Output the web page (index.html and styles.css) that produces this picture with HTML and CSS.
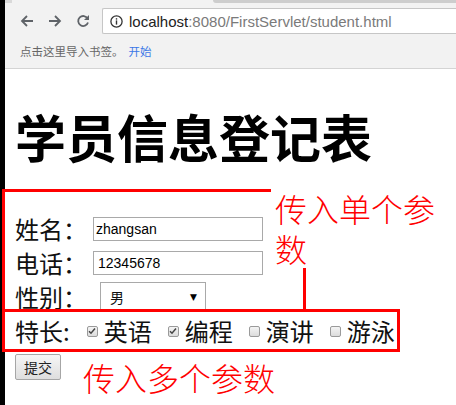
FILE: index.html
```html
<!DOCTYPE html>
<html lang="zh-CN">
<head>
<meta charset="utf-8">
<title>student</title>
<link rel="stylesheet" href="styles.css">
</head>
<body>
<div class="frame">
  <div class="blackbar"></div>
  <div class="window">
    <div class="chrome">
      <div class="tabstrip"><div class="tabcorner"></div><div class="tab"></div></div>
      <div class="toolbar">
        <span class="navbtn">
          <svg width="14" height="14" viewBox="0 0 14 14"><path d="M13 7H2M7 2L2 7l5 5" fill="none" stroke="#5f6368" stroke-width="1.8"/></svg>
        </span>
        <span class="navbtn">
          <svg width="14" height="14" viewBox="0 0 14 14"><path d="M1 7h11M7 2l5 5-5 5" fill="none" stroke="#5f6368" stroke-width="1.8"/></svg>
        </span>
        <span class="navbtn">
          <svg width="14" height="14" viewBox="0 0 14 14"><path d="M11.6 4.6A5 5 0 1 0 12 8.5" fill="none" stroke="#5f6368" stroke-width="1.8"/><path d="M13 1v5H8z" fill="#5f6368"/></svg>
        </span>
        <div class="omnibox">
          <svg class="info" width="13" height="13" viewBox="0 0 13 13"><circle cx="6.5" cy="6.5" r="5.6" fill="none" stroke="#333" stroke-width="1.3"/><rect x="5.8" y="5.4" width="1.4" height="4.2" fill="#333"/><rect x="5.8" y="3.2" width="1.4" height="1.4" fill="#333"/></svg>
          <span class="host">localhost</span><span class="path">:8080/FirstServlet/student.html</span>
        </div>
      </div>
      <div class="bookmarks">点击这里导入书签。 <a class="start">开始</a></div>
    </div>
    <div class="page">
      <h1 class="title">学员信息登记表</h1>
      <form class="form">
        <div class="row row-a"><span class="label">姓名：</span><span class="field">zhangsan</span></div>
        <div class="row row-b"><span class="label">电话：</span><span class="field field-b">12345678</span></div>
        <div class="row row-c"><span class="label">性别：</span><span class="select"><span class="opt">男</span><span class="arrow">▼</span></span></div>
        <div class="row row-d">
          <span class="label">特长:</span>
          <span class="cb checked first"><svg width="8" height="8" viewBox="0 0 8 8"><path d="M1 4.2l2 2L7 1.6" fill="none" stroke="#444" stroke-width="1.5"/></svg></span><span class="opt-text">英语</span>
          <span class="cb checked"><svg width="8" height="8" viewBox="0 0 8 8"><path d="M1 4.2l2 2L7 1.6" fill="none" stroke="#444" stroke-width="1.5"/></svg></span><span class="opt-text">编程</span>
          <span class="cb"></span><span class="opt-text">演讲</span>
          <span class="cb"></span><span class="opt-text">游泳</span>
        </div>
        <div class="row row-e"><span class="button">提交</span></div>
      </form>
      <div class="box box-one"></div>
      <div class="box box-two"></div>
      <div class="note note-one">传入单个参数</div>
      <div class="note note-two">传入多个参数</div>
    </div>
  </div>
</div>
</body>
</html>
```
FILE: styles.css
```css
html, body {
  margin: 0;
  padding: 0;
  background: #fff;
}
body {
  width: 456px;
  height: 405px;
  overflow: hidden;
  font-family: "Noto Sans CJK SC", "Liberation Sans", sans-serif;
}
.frame {
  display: flex;
  height: 405px;
}
.blackbar {
  width: 5px;
  flex: none;
  background: #000;
}
.window {
  flex: 1;
  display: flex;
  flex-direction: column;
  position: relative;
  min-width: 0;
}
.chrome {
  height: 68px;
  background: #f2f2f2;
  border-bottom: 1px solid #d4d4d4;
  display: flex;
  flex-direction: column;
}
.tabstrip {
  height: 3px;
  display: flex;
}
.tabcorner {
  width: 7px;
  background: #d9d9d9;
}
.tab {
  margin-left: 201px;
  flex: 1;
  background: #cdcdcd;
  border-radius: 0 0 0 4px;
}
.toolbar {
  margin-top: 5px;
  height: 26px;
  display: flex;
  align-items: center;
  padding-left: 8px;
}
.navbtn {
  width: 28px;
  display: flex;
  justify-content: center;
  align-items: center;
}
.omnibox {
  margin-left: 5px;
  flex: 1;
  height: 24px;
  background: #fff;
  border: 1px solid #c6c6c6;
  border-right: none;
  border-radius: 2px 0 0 2px;
  display: flex;
  align-items: center;
  padding-left: 7px;
  font-family: "Liberation Sans", Arial, sans-serif;
  font-size: 15px;
  white-space: nowrap;
}
.info {
  margin-right: 6px;
}
.host { color: #222; }
.path { color: #7a7a7a; }
.bookmarks {
  flex: 1;
  display: flex;
  align-items: center;
  padding-left: 15px;
  font-size: 11.5px;
  color: #666;
}
.start {
  color: #3b78e7;
  margin-left: 5px;
}
.page {
  flex: 1;
  padding-left: 10px;
}
.title {
  margin: 42px 0 0 0;
  font-size: 51px;
  line-height: 51px;
  font-weight: 700;
  color: #000;
  letter-spacing: 0;
}
.form {
  margin-top: 50px;
  display: flex;
  flex-direction: column;
}
.row {
  display: flex;
  align-items: center;
  font-size: 24px;
  color: #111;
}
.row-a { height: 34px; }
.row-b { height: 34px; }
.row-c { height: 34px; }
.row-d { height: 34px; }
.row-e { height: 30px; margin-top: 4px; align-items: flex-start; }
.label {
  line-height: 1;
}
.field {
  margin-left: 6px;
  width: 166px;
  height: 22px;
  border: 1px solid #a9a9a9;
  padding-left: 2px;
  display: flex;
  align-items: center;
  font-family: "Liberation Sans", Arial, sans-serif;
  font-size: 14px;
  color: #000;
}
.field-b {
  padding-left: 4px;
  width: 164px;
}
.select {
  margin-left: 13px;
  width: 106px;
  height: 30px;
  border: 1px solid #a9a9a9;
  background: #fff;
  display: flex;
  align-items: center;
  justify-content: space-between;
  padding: 0 8px 0 9px;
  box-sizing: border-box;
  font-size: 14px;
}
.arrow {
  font-family: "DejaVu Sans", sans-serif;
  font-size: 9px;
  color: #000;
}
.cb {
  width: 9px;
  height: 9px;
  border: 1px solid #9a9a9a;
  border-radius: 2px;
  background: linear-gradient(#f4f4f4, #dcdcdc);
  display: flex;
  align-items: center;
  justify-content: center;
  margin-left: 16px;
  margin-right: 6px;
}
.cb.first { margin-left: 17px; }
.opt-text { line-height: 1; }
.button {
  margin-top: 2px;
  width: 44px;
  height: 24px;
  border: 1px solid #a6a6a6;
  border-radius: 2px;
  background: linear-gradient(#f6f6f6, #dedede);
  display: flex;
  align-items: center;
  justify-content: center;
  font-size: 14px;
  color: #222;
}
.box {
  position: absolute;
  border: 3px solid #f00;
  box-sizing: border-box;
}
.box-one {
  left: -3px;
  top: 189px;
  width: 304px;
  height: 123px;
}
.box-two {
  left: -3px;
  top: 309px;
  width: 398px;
  height: 43px;
}
.note {
  position: absolute;
  color: #f00;
  font-size: 32px;
  font-weight: 300;
  line-height: 40px;
  background: #fff;
}
.note-one {
  left: 266px;
  top: 186px;
  width: 170px;
  padding: 2px 4px 0 4px;
}
.note-two {
  left: 78px;
  top: 357px;
  background: transparent;
}
```
